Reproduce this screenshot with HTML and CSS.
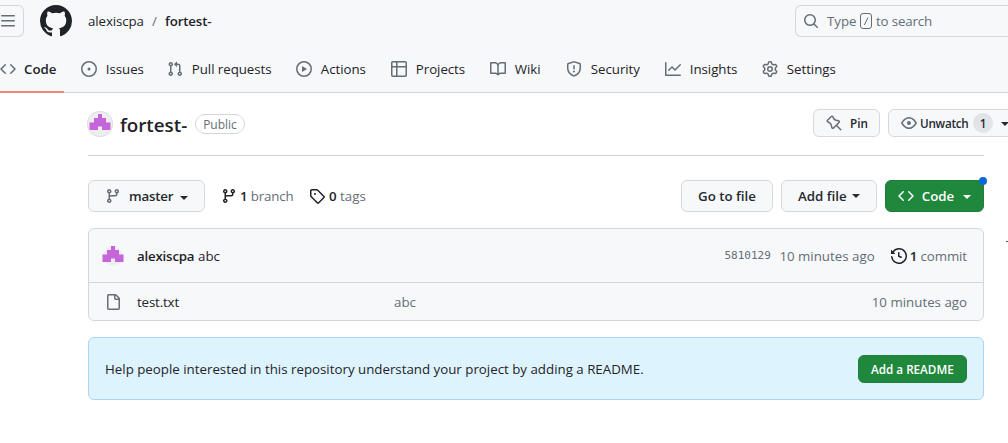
FILE: index.html
```html
<!DOCTYPE html>
<html lang="en">
<head>
<meta charset="utf-8">
<title>alexiscpa/fortest-</title>
<link rel="stylesheet" href="styles.css">
</head>
<body>
<svg class="defs" aria-hidden="true">
  <symbol id="code" viewBox="0 0 16 16"><path d="m11.28 3.22 4.25 4.25a.75.75 0 0 1 0 1.06l-4.25 4.25a.749.749 0 0 1-1.06-1.06L13.94 8l-3.72-3.72a.749.749 0 0 1 1.06-1.06Zm-6.56 0a.751.751 0 0 1 1.06 1.06L2.06 8l3.72 3.72a.751.751 0 0 1-1.06 1.06L.47 8.53a.75.75 0 0 1 0-1.06Z"/></symbol>
  <symbol id="branch" viewBox="0 0 16 16"><path d="M9.5 3.25a2.25 2.25 0 1 1 3 2.122V6A2.5 2.5 0 0 1 10 8.500H6a1 1 0 0 0-1 1v1.128a2.251 2.251 0 1 1-1.500 0V5.372a2.250 2.250 0 1 1 1.500 0v1.836A2.493 2.493 0 0 1 6 7h4a1 1 0 0 0 1-1v-.628A2.250 2.250 0 0 1 9.500 3.250Zm-6 0a.75.75 0 1 0 1.500 0 .75.75 0 0 0-1.500 0Zm8.250-.75a.75.75 0 1 0 0 1.500.75.75 0 0 0 0-1.500ZM4.250 12a.75.75 0 1 0 0 1.500.75.75 0 0 0 0-1.500Z"/></symbol>
  <symbol id="castle" viewBox="0 0 20 16"><path d="M8 0h4v4h4v4.500h4.500V16H12v-3.500H8V16H-.500V8.500H4V4h4Z"/></symbol>
</svg>

<header class="header">
  <div class="topbar">
    <div class="menu"><svg class="icon" viewBox="0 0 16 16"><path d="M1 2.750A.75.75 0 0 1 1.750 2h12.500a.75.75 0 0 1 0 1.500H1.750A.75.75 0 0 1 1 2.750Zm0 5A.75.75 0 0 1 1.750 7h12.500a.75.75 0 0 1 0 1.500H1.750A.75.75 0 0 1 1 7.750ZM1.750 12h12.500a.75.75 0 0 1 0 1.500H1.750a.75.75 0 0 1 0-1.500Z"/></svg></div>
    <svg class="mark" viewBox="0 0 16 16"><path d="M8 0c4.420 0 8 3.580 8 8a8.013 8.013 0 0 1-5.450 7.590c-.4.080-.55-.17-.55-.38 0-.27.010-1.130.010-2.200 0-.75-.25-1.230-.54-1.480 1.780-.2 3.650-.88 3.650-3.950 0-.88-.31-1.590-.82-2.150.080-.2.360-1.020-.080-2.120 0 0-.67-.22-2.200.82-.64-.18-1.320-.27-2-.27-.68 0-1.360.090-2 .27-1.530-1.030-2.200-.82-2.200-.82-.44 1.100-.16 1.920-.080 2.120-.51.56-.82 1.280-.82 2.150 0 3.060 1.860 3.750 3.640 3.950-.23.2-.44.55-.51 1.070-.46.210-1.610.55-2.330-.66-.15-.24-.6-.83-1.230-.82-.67.010-.27.380.010.530.34.190.73.9.82 1.130.16.450.68 1.310 2.690.940 0 .670.010 1.300.010 1.490 0 .210-.15.450-.55.380A7.995 7.995 0 0 1 0 8c0-4.420 3.580-8 8-8Z"/></svg>
    <nav class="crumbs"><span class="owner">alexiscpa</span><span class="slash">/</span><span class="repo">fortest-</span></nav>
    <div class="search">
      <svg class="icon" viewBox="0 0 16 16"><path d="M10.680 11.740a6 6 0 0 1-7.922-8.982 6 6 0 0 1 8.982 7.922l3.040 3.040a.749.749 0 0 1-1.060 1.060ZM11.500 7a4.499 4.499 0 1 0-8.997 0A4.499 4.499 0 0 0 11.500 7Z"/></svg>
      <span class="type">Type</span><kbd><svg viewBox="0 0 12 16"><rect x=".5" y=".5" width="11" height="15" rx="2.500"/><path d="M8 4.500 4.300 12"/></svg></kbd><span class="tosearch">to search</span>
    </div>
  </div>
  <nav class="tabs">
    <a class="tab active"><svg class="icon"><use href="#code"/></svg><span>Code</span></a>
    <a class="tab"><svg class="icon" viewBox="0 0 16 16"><path d="M8 9.500a1.500 1.500 0 1 0 0-3 1.500 1.500 0 0 0 0 3Z"/><path d="M8 0a8 8 0 1 1 0 16A8 8 0 0 1 8 0ZM1.500 8a6.500 6.500 0 1 0 13 0 6.500 6.500 0 0 0-13 0Z"/></svg><span>Issues</span></a>
    <a class="tab"><svg class="icon" viewBox="0 0 16 16"><path d="M1.500 3.250a2.250 2.250 0 1 1 3 2.122v5.256a2.251 2.251 0 1 1-1.500 0V5.372A2.250 2.250 0 0 1 1.500 3.250Zm5.677-.177L9.573.677A.25.25 0 0 1 10 .854V2.500h1A2.500 2.500 0 0 1 13.500 5v5.628a2.251 2.251 0 1 1-1.500 0V5a1 1 0 0 0-1-1h-1v1.646a.25.25 0 0 1-.427.177L7.177 3.427a.25.25 0 0 1 0-.354ZM3.750 2.500a.75.75 0 1 0 0 1.500.75.75 0 0 0 0-1.500Zm0 9.500a.75.75 0 1 0 0 1.500.75.75 0 0 0 0-1.500Zm8.250.75a.75.75 0 1 0 1.500 0 .75.75 0 0 0-1.500 0Z"/></svg><span>Pull requests</span></a>
    <a class="tab"><svg class="icon" viewBox="0 0 16 16"><path d="M8 0a8 8 0 1 1 0 16A8 8 0 0 1 8 0ZM1.500 8a6.500 6.500 0 1 0 13 0 6.500 6.500 0 0 0-13 0Zm4.879-2.773 4.264 2.559a.25.25 0 0 1 0 .428l-4.264 2.559A.25.25 0 0 1 6 10.559V5.442a.25.25 0 0 1 .379-.215Z"/></svg><span>Actions</span></a>
    <a class="tab"><svg class="icon" viewBox="0 0 16 16"><path d="M0 1.750C0 .784.784 0 1.750 0h12.500C15.216 0 16 .784 16 1.750v12.500A1.750 1.750 0 0 1 14.250 16H1.750A1.750 1.750 0 0 1 0 14.250ZM6.500 6.500v8h7.750a.25.25 0 0 0 .25-.25V6.500Zm8-1.500V1.750a.25.25 0 0 0-.25-.25H6.500V5Zm-13 1.500v7.750c0 .138.112.25.25.25H5v-8ZM5 5V1.500H1.750a.25.25 0 0 0-.25.25V5Z"/></svg><span>Projects</span></a>
    <a class="tab"><svg class="icon" viewBox="0 0 16 16"><path d="M0 1.750A.75.75 0 0 1 .75 1h4.253c1.227 0 2.317.590 3 1.501A3.743 3.743 0 0 1 11.006 1h4.245a.75.75 0 0 1 .75.750v10.500a.75.75 0 0 1-.75.750h-4.507a2.250 2.250 0 0 0-1.591.659l-.622.621a.75.75 0 0 1-1.060 0l-.622-.621A2.250 2.250 0 0 0 5.258 13H.75a.75.75 0 0 1-.75-.750Zm7.251 10.324.004-5.073-.002-2.253A2.250 2.250 0 0 0 5.003 2.500H1.500v9h3.757a3.750 3.750 0 0 1 1.994.574ZM8.755 4.750l-.004 7.322a3.752 3.752 0 0 1 1.992-.572H14.500v-9h-3.495a2.250 2.250 0 0 0-2.250 2.250Z"/></svg><span>Wiki</span></a>
    <a class="tab"><svg class="icon" viewBox="0 0 16 16"><path d="m8.533.133 5.250 1.680A1.750 1.750 0 0 1 15 3.480V7c0 1.566-.320 3.182-1.303 4.682-.983 1.498-2.585 2.813-5.032 3.855a1.697 1.697 0 0 1-1.330 0c-2.447-1.042-4.049-2.357-5.032-3.855C1.320 10.182 1 8.566 1 7V3.480a1.755 1.755 0 0 1 1.217-1.667l5.250-1.680a1.748 1.748 0 0 1 1.066 0Zm-.610 1.429-5.250 1.680a.25.25 0 0 0-.174.238V7c0 1.358.275 2.666 1.057 3.860.784 1.194 2.121 2.340 4.366 3.297a.196.196 0 0 0 .154 0c2.245-.956 3.582-2.104 4.366-3.298C13.225 9.666 13.500 8.360 13.500 7V3.480a.251.251 0 0 0-.174-.237l-5.250-1.680a.25.25 0 0 0-.153 0ZM8.750 4.750v3a.75.75 0 0 1-1.500 0v-3a.75.75 0 0 1 1.500 0ZM9 10.500a1 1 0 1 1-2 0 1 1 0 0 1 2 0Z"/></svg><span>Security</span></a>
    <a class="tab"><svg class="icon" viewBox="0 0 16 16"><path d="M1.500 1.750V13.500h13.750a.75.75 0 0 1 0 1.500H.75a.75.75 0 0 1-.75-.750V1.750a.75.75 0 0 1 1.500 0Zm14.280 2.530-5.250 5.250a.75.75 0 0 1-1.060 0L7 7.060 4.280 9.780a.751.751 0 0 1-1.060-1.060l3.250-3.250a.75.75 0 0 1 1.060 0L10 7.940l4.720-4.720a.751.751 0 0 1 1.060 1.060Z"/></svg><span>Insights</span></a>
    <a class="tab"><svg class="icon" viewBox="0 0 16 16"><path d="M8 0a8.200 8.200 0 0 1 .701.031C9.444.095 9.990.645 10.160 1.290l.288 1.107c.018.066.079.158.212.224.231.114.454.243.668.386.123.082.233.090.299.071l1.103-.303c.644-.176 1.392.021 1.820.630.270.385.506.792.704 1.218.315.675.111 1.422-.364 1.891l-.814.806c-.049.048-.098.147-.088.294.016.257.016.515 0 .772-.010.147.038.246.088.294l.814.806c.475.469.679 1.216.364 1.891a7.977 7.977 0 0 1-.704 1.217c-.428.610-1.176.807-1.820.630l-1.102-.302c-.067-.019-.177-.011-.300.071a5.909 5.909 0 0 1-.668.386c-.133.066-.194.158-.211.224l-.290 1.106c-.168.646-.715 1.196-1.458 1.260a8.006 8.006 0 0 1-1.402 0c-.743-.064-1.289-.614-1.458-1.260l-.289-1.106c-.018-.066-.079-.158-.212-.224a5.738 5.738 0 0 1-.668-.386c-.123-.082-.233-.090-.299-.071l-1.103.303c-.644.176-1.392-.021-1.820-.630a8.120 8.120 0 0 1-.704-1.218c-.315-.675-.111-1.422.363-1.891l.815-.806c.050-.048.098-.147.088-.294a6.214 6.214 0 0 1 0-.772c.010-.147-.038-.246-.088-.294l-.815-.806C.635 6.045.431 5.298.746 4.623a7.920 7.920 0 0 1 .704-1.217c.428-.610 1.176-.807 1.820-.630l1.102.302c.067.019.177.011.300-.071.214-.143.437-.272.668-.386.133-.066.194-.158.211-.224l.290-1.106C6.009.645 6.556.095 7.299.030 7.530.010 7.764 0 8 0Zm-.571 1.525c-.036.003-.108.036-.137.146l-.289 1.105c-.147.561-.549.967-.998 1.189-.173.086-.340.183-.500.290-.417.278-.970.423-1.529.270l-1.103-.303c-.109-.030-.175.016-.195.045-.220.312-.412.644-.573.990-.014.031-.021.110.059.190l.815.806c.411.406.562.957.530 1.456a4.709 4.709 0 0 0 0 .582c.032.499-.119 1.050-.530 1.456l-.815.806c-.081.080-.073.159-.059.190.162.346.353.677.573.989.020.030.085.076.195.046l1.102-.303c.560-.153 1.113-.008 1.530.270.161.107.328.204.501.290.447.222.850.629.997 1.189l.289 1.105c.029.109.101.143.137.146a6.600 6.600 0 0 0 1.142 0c.036-.003.108-.036.137-.146l.289-1.105c.147-.561.549-.967.998-1.189.173-.086.340-.183.500-.290.417-.278.970-.423 1.529-.270l1.103.303c.109.029.175-.016.195-.045.220-.313.411-.644.573-.990.014-.031.021-.110-.059-.190l-.815-.806c-.411-.406-.562-.957-.530-1.456a4.709 4.709 0 0 0 0-.582c-.032-.499.119-1.050.530-1.456l.815-.806c.081-.080.073-.159.059-.190a6.464 6.464 0 0 0-.573-.989c-.020-.030-.085-.076-.195-.046l-1.102.303c-.560.153-1.113.008-1.530-.270a4.440 4.440 0 0 0-.501-.290c-.447-.222-.850-.629-.997-1.189l-.289-1.105c-.029-.110-.101-.143-.137-.146a6.600 6.600 0 0 0-1.142 0ZM11 8a3 3 0 1 1-6 0 3 3 0 0 1 6 0ZM9.500 8a1.500 1.500 0 1 0-3.001.001A1.500 1.500 0 0 0 9.500 8Z"/></svg><span>Settings</span></a>
  </nav>
</header>

<main class="main">
  <section class="title-row">
    <span class="avatar large"><svg><use href="#castle"/></svg></span>
    <h1>fortest-</h1>
    <span class="public">Public</span>
    <div class="repo-actions">
      <button class="btn small pin"><svg class="icon" viewBox="0 0 16 16"><path d="m11.294.984 3.722 3.722a1.750 1.750 0 0 1-.504 2.826l-1.327.613a3.089 3.089 0 0 0-1.707 2.084l-.584 2.454c-.317 1.332-1.972 1.800-2.940.832L5.750 11.311 1.780 15.280a.749.749 0 1 1-1.060-1.060l3.969-3.970-2.204-2.204c-.968-.968-.500-2.623.832-2.940l2.454-.584a3.080 3.080 0 0 0 2.084-1.707l.613-1.327a1.750 1.750 0 0 1 2.826-.504ZM6.283 9.723l2.732 2.731a.25.25 0 0 0 .420-.119l.584-2.454a4.586 4.586 0 0 1 2.537-3.098l1.328-.613a.25.25 0 0 0 .072-.404l-3.722-3.722a.25.25 0 0 0-.404.072l-.613 1.328a4.584 4.584 0 0 1-3.098 2.537l-2.454.584a.25.25 0 0 0-.119.420l2.731 2.732Z" transform="matrix(-1 0 0 1 16 0)"/></svg><span>Pin</span></button>
      <button class="btn small watch"><svg class="icon" viewBox="0 0 16 16"><path d="M8 2c1.981 0 3.671.992 4.933 2.078 1.270 1.091 2.187 2.345 2.637 3.023a1.620 1.620 0 0 1 0 1.798c-.450.678-1.367 1.932-2.637 3.023C11.670 13.008 9.981 14 8 14c-1.981 0-3.671-.992-4.933-2.078C1.797 10.830.880 9.576.430 8.898a1.620 1.620 0 0 1 0-1.798c.450-.677 1.367-1.931 2.637-3.022C4.330 2.992 6.019 2 8 2ZM1.679 7.932a.120.120 0 0 0 0 .136c.411.622 1.241 1.750 2.366 2.717C5.176 11.758 6.527 12.500 8 12.500c1.473 0 2.825-.742 3.955-1.715 1.124-.967 1.954-2.096 2.366-2.717a.120.120 0 0 0 0-.136c-.412-.621-1.242-1.750-2.366-2.717C10.824 4.242 9.473 3.500 8 3.500c-1.473 0-2.825.742-3.955 1.715-1.124.967-1.954 2.096-2.366 2.717ZM8 10a2 2 0 1 1-.001-3.999A2 2 0 0 1 8 10Z"/></svg><span>Unwatch</span><b class="count">1</b><i class="caret"></i></button>
    </div>
  </section>

  <section class="toolbar">
    <button class="btn branch-btn"><svg class="icon"><use href="#branch"/></svg><span>master</span><i class="caret"></i></button>
    <a class="stat branches"><svg class="icon"><use href="#branch"/></svg><span><b>1</b> branch</span></a>
    <a class="stat tags"><svg class="icon" viewBox="0 0 16 16"><path d="M1 7.775V2.750C1 1.784 1.784 1 2.750 1h5.025c.464 0 .910.184 1.238.513l6.250 6.250a1.750 1.750 0 0 1 0 2.474l-5.026 5.026a1.750 1.750 0 0 1-2.474 0l-6.250-6.250A1.752 1.752 0 0 1 1 7.775Zm1.500 0c0 .066.026.130.073.177l6.250 6.250a.25.25 0 0 0 .354 0l5.025-5.025a.25.25 0 0 0 0-.354l-6.250-6.250a.25.25 0 0 0-.177-.073H2.750a.25.25 0 0 0-.25.250ZM6 5a1 1 0 1 1 0 2 1 1 0 0 1 0-2Z"/></svg><span><b>0</b> tags</span></a>
    <div class="file-actions">
      <button class="btn goto"><span>Go to file</span></button>
      <button class="btn add"><span>Add file</span><i class="caret"></i></button>
      <button class="btn green code"><svg class="icon"><use href="#code"/></svg><span>Code</span><i class="caret"></i><em class="dot"></em></button>
    </div>
  </section>

  <section class="files">
    <div class="commit-row">
      <span class="avatar"><svg><use href="#castle"/></svg></span>
      <span class="author">alexiscpa</span><span class="message">abc</span>
      <div class="commit-meta">
        <span class="sha">5810129</span><span class="age">10 minutes ago</span>
        <svg class="icon" viewBox="0 0 16 16"><path d="m.427 1.927 1.215 1.215a8.002 8.002 0 1 1-1.600 5.685.75.75 0 1 1 1.493-.154 6.500 6.500 0 1 0 1.180-4.458l1.358 1.358A.25.25 0 0 1 3.896 6H.25A.25.25 0 0 1 0 5.750V2.104a.25.25 0 0 1 .427-.177ZM7.750 4a.75.75 0 0 1 .75.750v2.992l2.028.812a.75.75 0 0 1-.557 1.392l-2.500-1A.751.751 0 0 1 7 8.250v-3.500A.75.75 0 0 1 7.750 4Z"/></svg>
        <span class="commits"><b>1</b> commit</span>
      </div>
    </div>
    <div class="file-row">
      <svg class="icon" viewBox="0 0 16 16"><path d="M2 1.750C2 .784 2.784 0 3.750 0h6.586c.464 0 .909.184 1.237.513l2.914 2.914c.329.328.513.773.513 1.237v9.586A1.750 1.750 0 0 1 13.250 16h-9.500A1.750 1.750 0 0 1 2 14.250Zm1.750-.25a.25.25 0 0 0-.25.250v12.500c0 .138.112.250.250.250h9.500a.25.25 0 0 0 .250-.250V6h-2.750A1.750 1.750 0 0 1 9 4.250V1.500Zm6.750.062V4.250c0 .138.112.250.250.250h2.688l-.011-.013-2.914-2.914-.013-.011Z"/></svg>
      <span class="filename">test.txt</span><span class="filemsg">abc</span><span class="age">10 minutes ago</span>
    </div>
  </section>

  <section class="notice">
    <p>Help people interested in this repository understand your project by adding a README.</p>
    <button class="btn small green readme"><span>Add a README</span></button>
  </section>
  <i class="edge-mark"></i>
</main>
</body>
</html>
```
FILE: styles.css
```css
* { box-sizing: border-box; }
body {
  margin: 0;
  width: 1008px;
  height: 443px;
  overflow: hidden;
  background: #fff;
  color: #1f2328;
  font: 13.300px/20px "Open Sans", "Noto Sans", sans-serif;
  white-space: nowrap;
}
.defs { display: none; }
.icon { width: 16px; height: 16px; flex: none; fill: #656d76; }
b, h1, .repo, .author { font-weight: 600; }
h1, p { margin: 0; }

.header { height: 93px; padding-top: 5px; background: #f6f8fa; border-bottom: 1px solid #d0d7de; }
.topbar { display: flex; align-items: center; height: 32px; }
.menu { width: 24px; height: 32px; border: 1px solid #d0d7de; border-left: 0; border-radius: 0 6px 6px 0; display: flex; align-items: center; }
.mark { width: 32px; height: 32px; margin-left: 16px; fill: #1f2328; }
.crumbs { display: flex; width: 723px; padding-left: 16px; flex: none; }
.owner { width: 64px; letter-spacing: -.1px; }
.slash { width: 13px; color: #656d76; }
.repo { letter-spacing: -.15px; }
.search { display: flex; align-items: center; flex: 1; height: 32px; padding-left: 7px; border: 1px solid #d0d7de; border-right: 0; border-radius: 6px 0 0 6px; color: #656d76; }
.type { width: 33px; margin-left: 8px; }
kbd { display: flex; width: 12px; height: 16px; }
kbd svg { width: 12px; height: 16px; fill: none; stroke: #656d76; }
.tosearch { margin-left: 4px; letter-spacing: -.15px; }

.tabs { display: grid; grid-template-columns: 81px 86px 129px 95px 99px 76px 99px 97px auto; height: 56px; padding-top: 8px; }
.tab { display: flex; align-items: center; gap: 8.800px; height: 48px; letter-spacing: -.05px; }
.active span { font-weight: 600; }
.active { width: 64px; gap: 8px; border-bottom: 2px solid #f08a76; padding-top: 2px; }

.main { position: relative; padding-left: 88px; }
.title-row { display: flex; align-items: center; height: 63px; width: 896px; border-bottom: 1px solid #d0d7de; }
.avatar { width: 20px; height: 20px; border-radius: 50%; background: #eee; display: flex; justify-content: center; flex: none; }
.avatar svg { width: 20px; height: 16px; flex: none; overflow: visible; fill: #c665d9; }
.large { width: 24px; height: 24px; box-shadow: 0 0 0 1px #dddfe1; padding-top: 2px; }
.defs symbol { overflow: visible; }
h1 { margin-left: 8px; width: 67px; flex: none; font-size: 18.800px; line-height: 30px; padding-top: 1px; }
.public { flex: none; width: 50px; height: 20px; margin-left: 8px; border: 1px solid #d0d7de; border-radius: 10px; color: #656d76; font-size: 12px; line-height: 19px; text-align: center; }
.repo-actions { display: flex; flex: none; gap: 8px; margin-left: 568px; padding-bottom: 2px; }
.btn { display: flex; align-items: center; flex: none; height: 32px; padding: 0 16px; border: 1px solid #d5d8db; border-radius: 6px; background: #f6f8fa; color: #24292f; font: 600 13.300px/20px "Open Sans", "Noto Sans", sans-serif; }
.small { height: 28px; font-size: 11.700px; }
.pin { width: 67px; padding: 0 12px; gap: 8px; }
.watch { width: 150px; padding: 0 12px; }
.watch span { width: 48px; margin-left: 3px; letter-spacing: -.25px; }
.count { display: inline-block; width: 20px; height: 20px; margin-left: 5px; border-radius: 10px; background: #e2e4e7; text-align: center; }
.caret { width: 0; height: 0; border: 4px solid transparent; border-top-color: currentColor; border-bottom: 0; }
.btn .caret { margin-top: 1px; }
.watch .caret { margin-left: 8px; }

.toolbar { display: flex; align-items: center; margin-top: 24px; width: 896px; height: 32px; }
.branch-btn { width: 117px; }
.branch-btn span { width: 44px; margin-left: 8px; letter-spacing: -.2px; }
.btn.branch-btn .caret { margin: 3px 0 0 7px; }
.stat { display: flex; align-items: center; color: #656d76; }
.stat .icon { fill: #1f2328; }
.stat b, .commits b { color: #1f2328; }
.branches { width: 88px; margin-left: 16px; gap: 3px; letter-spacing: -.15px; }
.tags { gap: 4px; }
.file-actions { display: flex; gap: 8px; margin-left: auto; }
.goto { width: 92px; }
.add { width: 96px; }
.add .caret { margin-left: 5px; }
.btn.add .caret { margin-top: 0; }
.code { position: relative; width: 99px; padding: 0 12px; }
.code span { width: 34px; margin-left: 7px; }
.code .caret { margin-left: 8px; }
.green { background: #1f883d; border-color: #1f7f3a; color: #fff; }
.green .icon { fill: #fff; }
.dot { position: absolute; top: -4px; right: -4px; width: 8px; height: 8px; border-radius: 50%; background: #0969da; }

.files { width: 896px; height: 93px; margin-top: 16px; border: 1px solid #d0d7de; border-radius: 6px; background: #f6f8fa; }
.commit-row { display: flex; align-items: center; height: 54px; padding: 0 16px 0 14px; border-bottom: 1px solid #d0d7de; }
.author { width: 61px; margin-left: 14px; letter-spacing: -.2px; }
.commit-meta { display: flex; align-items: center; margin-left: auto; color: #656d76; }
.commit-meta .icon { fill: #1f2328; margin-left: 16px; }
.sha { width: 55px; padding-top: 1px; font: 11px/20px "DejaVu Sans Mono", monospace; }
.commits { margin-left: 3px; letter-spacing: -.1px; }
.file-row { display: flex; align-items: center; height: 37px; padding: 1px 16px 0; }
.filename { width: 257px; margin-left: 16px; letter-spacing: -.15px; }
.filemsg, .age { color: #656d76; }
.file-row .age { margin-left: auto; }

.notice { display: flex; align-items: center; justify-content: space-between; width: 896px; height: 63px; margin-top: 16px; padding: 0 16px; border: 1px solid #a9d5f2; border-radius: 6px; background: #ddf4ff; }
.readme { width: 109px; padding: 0 12px; }
.edge-mark { position: absolute; right: 0; top: 148px; width: 2px; height: 1px; background: #555; }
```
